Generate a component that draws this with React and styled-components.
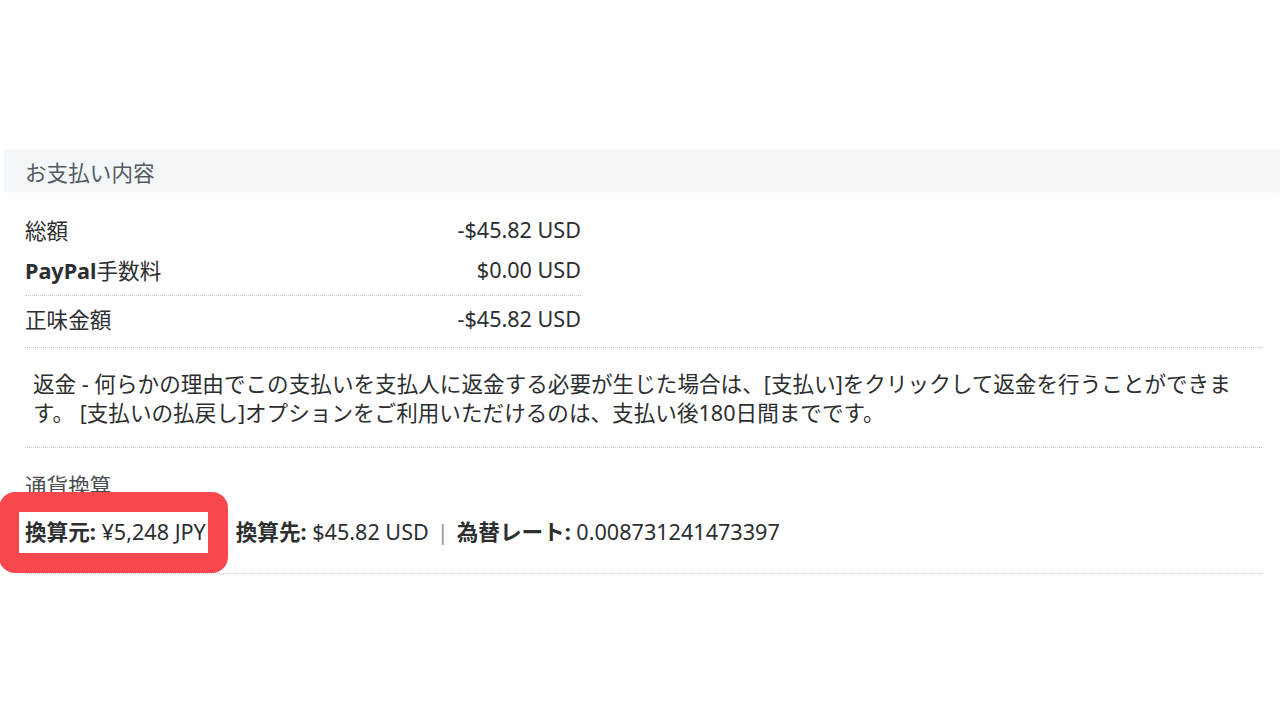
import React from 'react';
import styled, { createGlobalStyle } from 'styled-components';

const GlobalStyle = createGlobalStyle`
    html, body {
        margin: 0;
        padding: 0;
        background: #ffffff;
    }
    body {
        font-family: "Noto Sans", "Noto Sans CJK JP", sans-serif;
        color: #2c2e2f;
        font-size: 21.6px;
    }
`;

const Page = styled.div`
    width: 1280px;
    height: 720px;
    padding-top: 150px;
    box-sizing: border-box;
    overflow: hidden;
`;

const SectionHeader = styled.div`
    margin-left: 4px;
    height: 42px;
    display: flex;
    align-items: center;
    padding-left: 21px;
    background: #f4f7fa;
    box-shadow: 0 0 3px rgba(0, 0, 0, 0.04);
    color: #555a5e;
`;

const Body = styled.div`
    padding: 0 18px 0 25px;
`;

const Block = styled.div`
    border-bottom: 1px dotted #c8c8c8;
    padding: ${({ pad }) => pad || '0'};
`;

const Summary = styled.div`
    width: 556px;
    padding-top: 17px;
`;

const Row = styled.div`
    display: flex;
    justify-content: space-between;
    align-items: center;
    height: ${({ h }) => h || 40}px;
    border-top: ${({ divided }) => (divided ? '1px dotted #c8c8c8' : 'none')};
    margin-top: ${({ divided }) => (divided ? '6px' : '0')};
`;

const Bold = styled.b`
    font-weight: 700;
`;

const Refund = styled.p`
    margin: 0;
    padding-left: 8px;
    line-height: 29px;
    white-space: nowrap;
`;

const Caption = styled.div`
    line-height: 30px;
    color: #4a4d50;
`;

const Conversion = styled.div`
    margin-top: 16px;
    line-height: 30px;
    white-space: nowrap;
`;

const Sep = styled.span`
    color: #9a9a9a;
    margin: 0 8px;
`;

const Highlight = styled.span`
    position: relative;
    display: inline-block;
    margin: -5px 0 -6px -6px;
    padding: 5px 2px 6px 6px;
    background: #ffffff;

    &::before {
        content: '';
        position: absolute;
        top: -20px;
        bottom: -20px;
        left: -20px;
        right: -20px;
        border: 20px solid #f8484e;
        border-radius: 16px;
        pointer-events: none;
    }
`;

export default function App() {
    return (
        <Page>
            <GlobalStyle />
            <SectionHeader>お支払い内容</SectionHeader>
            <Body>
                <Block pad="0 0 6px">
                    <Summary>
                        <Row>
                            <span>総額</span>
                            <span>-$45.82 USD</span>
                        </Row>
                        <Row>
                            <span><Bold>PayPal</Bold>手数料</span>
                            <span>$0.00 USD</span>
                        </Row>
                        <Row divided h={45}>
                            <span>正味金額</span>
                            <span>-$45.82 USD</span>
                        </Row>
                    </Summary>
                </Block>
                <Block pad="21px 0 20px">
                    <Refund>
                        返金 - 何らかの理由でこの支払いを支払人に返金する必要が生じた場合は、[支払い]をクリックして返金を行うことができま
                        <br />
                        す。 [支払いの払戻し]オプションをご利用いただけるのは、支払い後180日間までです。
                    </Refund>
                </Block>
                <Block pad="23px 0 26px">
                    <Caption>通貨換算</Caption>
                    <Conversion>
                        <Highlight>
                            <Bold>換算元:</Bold> ¥5,248 JPY
                        </Highlight>
                        <Sep>|</Sep>
                        <Bold>換算先:</Bold> $45.82 USD
                        <Sep>|</Sep>
                        <Bold>為替レート:</Bold> 0.008731241473397
                    </Conversion>
                </Block>
            </Body>
        </Page>
    );
}
